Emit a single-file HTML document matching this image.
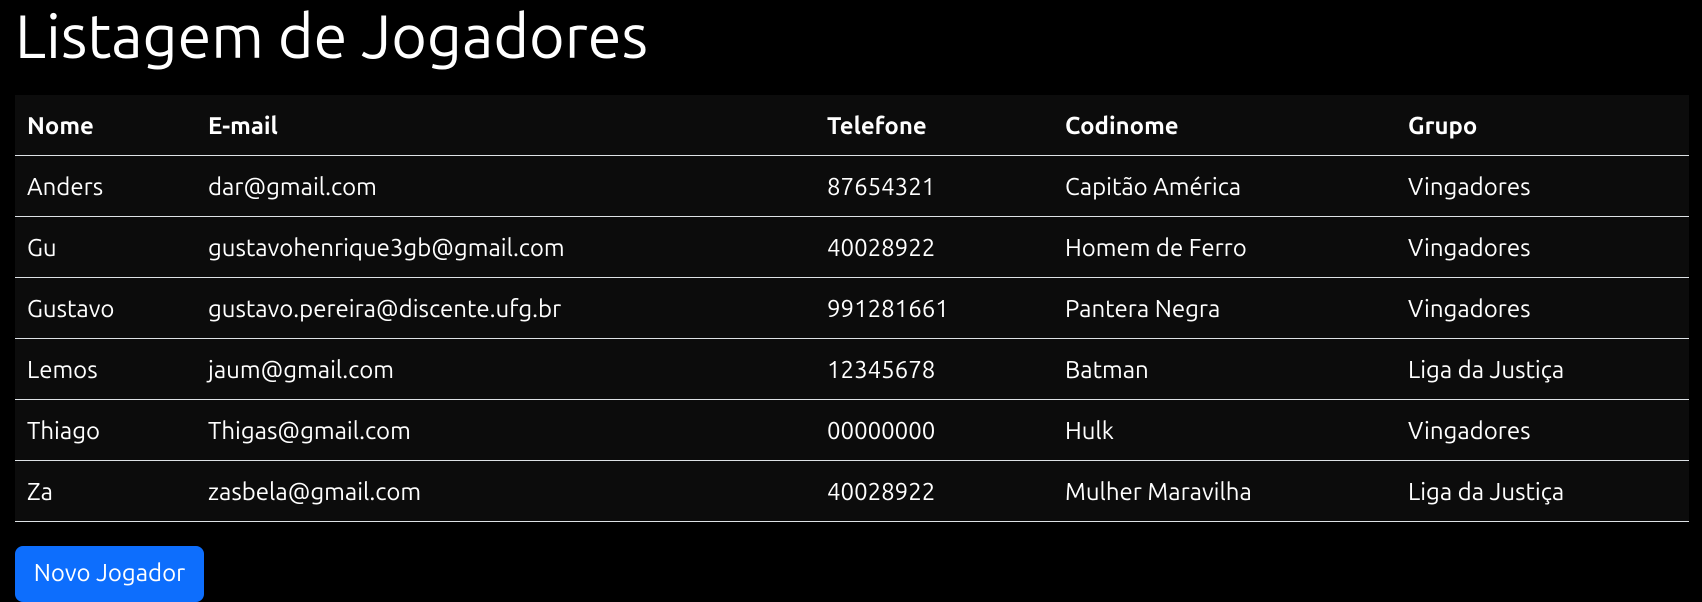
<!DOCTYPE html>
<html><head><meta charset="utf-8"><style>
html,body{margin:0;padding:0;background:#000;width:1702px;height:598px;overflow:hidden;font-family:"Ubuntu","Liberation Sans","DejaVu Sans",sans-serif;color:#fff}
h1{position:absolute;left:15px;top:0;margin:0;font-weight:400;font-size:61px;line-height:72px}
table{position:absolute;left:15px;top:95px;width:1674px;border-collapse:collapse;background:#0c0c0c;font-size:24px}
th,td{text-align:left;padding:0 0 0 12px;height:60px;border-bottom:1.5px solid #dee2e6;white-space:nowrap}
th{font-weight:700}
.btn{position:absolute;left:15px;top:546px;width:189px;height:56px;background:#0d6efd;border-radius:8px;font-size:24px;line-height:54px;text-align:center;color:#fff}
</style></head><body>
<h1>Listagem de Jogadores</h1>
<table>
<colgroup><col style="width:181px"><col style="width:619px"><col style="width:238px"><col style="width:343px"><col></colgroup>
<tr><th>Nome</th><th>E-mail</th><th>Telefone</th><th>Codinome</th><th>Grupo</th></tr>
<tr><td>Anders</td><td>dar@gmail.com</td><td>87654321</td><td>Capitão América</td><td>Vingadores</td></tr>
<tr><td>Gu</td><td>gustavohenrique3gb@gmail.com</td><td>40028922</td><td>Homem de Ferro</td><td>Vingadores</td></tr>
<tr><td>Gustavo</td><td>gustavo.pereira@discente.ufg.br</td><td>991281661</td><td>Pantera Negra</td><td>Vingadores</td></tr>
<tr><td>Lemos</td><td>jaum@gmail.com</td><td>12345678</td><td>Batman</td><td>Liga da Justiça</td></tr>
<tr><td>Thiago</td><td>Thigas@gmail.com</td><td>00000000</td><td>Hulk</td><td>Vingadores</td></tr>
<tr><td>Za</td><td>zasbela@gmail.com</td><td>40028922</td><td>Mulher Maravilha</td><td>Liga da Justiça</td></tr>
</table>
<div class="btn">Novo Jogador</div>
</body></html>
